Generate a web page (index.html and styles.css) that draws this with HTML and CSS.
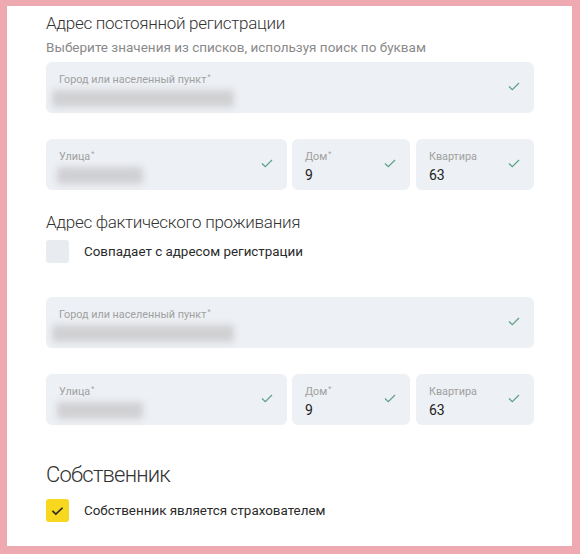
FILE: index.html
```html
<!DOCTYPE html>
<html lang="ru">
<head>
<meta charset="utf-8">
<link rel="stylesheet" href="styles.css">
</head>
<body>
<div class="frame">
  <div class="panel">
    <h2 class="title">Адрес постоянной регистрации</h2>
    <p class="hint">Выберите значения из списков, используя поиск по буквам</p>

    <div class="field full mt-hint">
      <div class="fbody">
        <div class="label">Город или населенный пункт<sup>*</sup></div>
        <div class="blur wide"></div>
      </div>
      <svg class="ok" viewBox="0 0 12 9" width="12" height="9"><path d="M1 4.5 L4.3 7.6 L11 1" fill="none" stroke="#5aa184" stroke-width="1.2"/></svg>
    </div>

    <div class="row mt-row">
      <div class="field street">
        <div class="fbody">
          <div class="label">Улица<sup>*</sup></div>
          <div class="blur short"></div>
        </div>
        <svg class="ok" viewBox="0 0 12 9" width="12" height="9"><path d="M1 4.5 L4.3 7.6 L11 1" fill="none" stroke="#5aa184" stroke-width="1.2"/></svg>
      </div>
      <div class="field small">
        <div class="fbody">
          <div class="label">Дом<sup>*</sup></div>
          <div class="value">9</div>
        </div>
        <svg class="ok" viewBox="0 0 12 9" width="12" height="9"><path d="M1 4.5 L4.3 7.6 L11 1" fill="none" stroke="#5aa184" stroke-width="1.2"/></svg>
      </div>
      <div class="field small">
        <div class="fbody">
          <div class="label">Квартира</div>
          <div class="value">63</div>
        </div>
        <svg class="ok" viewBox="0 0 12 9" width="12" height="9"><path d="M1 4.5 L4.3 7.6 L11 1" fill="none" stroke="#5aa184" stroke-width="1.2"/></svg>
      </div>
    </div>

    <h2 class="title mt-title2">Адрес фактического проживания</h2>
    <label class="check mt-check">
      <span class="box"></span>
      <span class="ctext">Совпадает с адресом регистрации</span>
    </label>

    <div class="field full mt-field3">
      <div class="fbody">
        <div class="label">Город или населенный пункт<sup>*</sup></div>
        <div class="blur wide"></div>
      </div>
      <svg class="ok" viewBox="0 0 12 9" width="12" height="9"><path d="M1 4.5 L4.3 7.6 L11 1" fill="none" stroke="#5aa184" stroke-width="1.2"/></svg>
    </div>

    <div class="row mt-row">
      <div class="field street">
        <div class="fbody">
          <div class="label">Улица<sup>*</sup></div>
          <div class="blur short"></div>
        </div>
        <svg class="ok" viewBox="0 0 12 9" width="12" height="9"><path d="M1 4.5 L4.3 7.6 L11 1" fill="none" stroke="#5aa184" stroke-width="1.2"/></svg>
      </div>
      <div class="field small">
        <div class="fbody">
          <div class="label">Дом<sup>*</sup></div>
          <div class="value">9</div>
        </div>
        <svg class="ok" viewBox="0 0 12 9" width="12" height="9"><path d="M1 4.5 L4.3 7.6 L11 1" fill="none" stroke="#5aa184" stroke-width="1.2"/></svg>
      </div>
      <div class="field small">
        <div class="fbody">
          <div class="label">Квартира</div>
          <div class="value">63</div>
        </div>
        <svg class="ok" viewBox="0 0 12 9" width="12" height="9"><path d="M1 4.5 L4.3 7.6 L11 1" fill="none" stroke="#5aa184" stroke-width="1.2"/></svg>
      </div>
    </div>

    <h2 class="big">Собственник</h2>
    <label class="check mt-check2">
      <span class="box on">
        <svg viewBox="0 0 14 10" width="13" height="10"><path d="M1.5 4.8 L5.2 8.3 L12.5 1.5" fill="none" stroke="#2b2b2b" stroke-width="1.8"/></svg>
      </span>
      <span class="ctext">Собственник является страхователем</span>
    </label>
  </div>
</div>
</body>
</html>
```

FILE: styles.css
```css
* { box-sizing: border-box; }
html, body { margin: 0; padding: 0; }
body {
  width: 580px;
  height: 554px;
  background: #efaab1;
  font-family: Roboto, "Noto Sans", sans-serif;
  color: #2a2a2a;
  overflow: hidden;
}
.frame {
  padding: 6px 8px 8px 7px;
  height: 554px;
}
.panel {
  background: #fff;
  height: 540px;
  padding: 6px 38px 0 39px;
}
.title {
  margin: 0;
  font-weight: 300;
  font-size: 17px;
  line-height: 22px;
  color: #333;
  letter-spacing: -0.3px;
}
.hint {
  margin: 3px 0 0;
  font-size: 13.5px;
  line-height: 20px;
  color: #8a8a8a;
}
.field {
  background: #edf0f4;
  border-radius: 6px;
  height: 51px;
  display: flex;
  align-items: center;
  justify-content: space-between;
  padding: 0 14px 0 13px;
}
.fbody {
  display: flex;
  flex-direction: column;
  height: 100%;
  padding-top: 12px;
}
.label {
  font-size: 10.8px;
  line-height: 12px;
  color: #a0a0a0;
  white-space: nowrap;
}
.label sup {
  font-size: 7px;
  vertical-align: 4px;
  line-height: 0;
  margin-left: 1px;
}
.value {
  font-size: 14px;
  line-height: 18px;
  margin-top: 3px;
  color: #222;
}
.blur {
  margin-top: 4px;
  height: 17px;
  background: #d0d0d3;
  filter: blur(3.5px);
  border-radius: 3px;
}
.wide { width: 182px; margin-left: -7px; }
.short { width: 86px; margin-left: -2px; }
.ok { flex: none; margin-top: -2px; }
.row {
  display: flex;
  gap: 5px;
}
.street { width: 241px; }
.small { flex: 1; }
.row .small:last-child { margin-left: 1px; }
.check {
  display: flex;
  align-items: center;
  gap: 15px;
}
.box {
  width: 23px;
  height: 23px;
  border-radius: 3px;
  background: #e8ebef;
  display: flex;
  align-items: center;
  justify-content: center;
  flex: none;
}
.box.on { background: #f8d81f; }
.ctext {
  font-size: 13.4px;
  color: #2a2a2a;
}
.big {
  margin: 36px 0 0;
  font-weight: 300;
  font-size: 22px;
  line-height: 28px;
  color: #333;
  letter-spacing: -0.8px;
}
.mt-hint { margin-top: 5px; }
.mt-row { margin-top: 26px; }
.mt-title2 { margin-top: 21px; }
.mt-check { margin-top: 7px; }
.mt-field3 { margin-top: 34px; }
.mt-check2 { margin-top: 10px; }
```
